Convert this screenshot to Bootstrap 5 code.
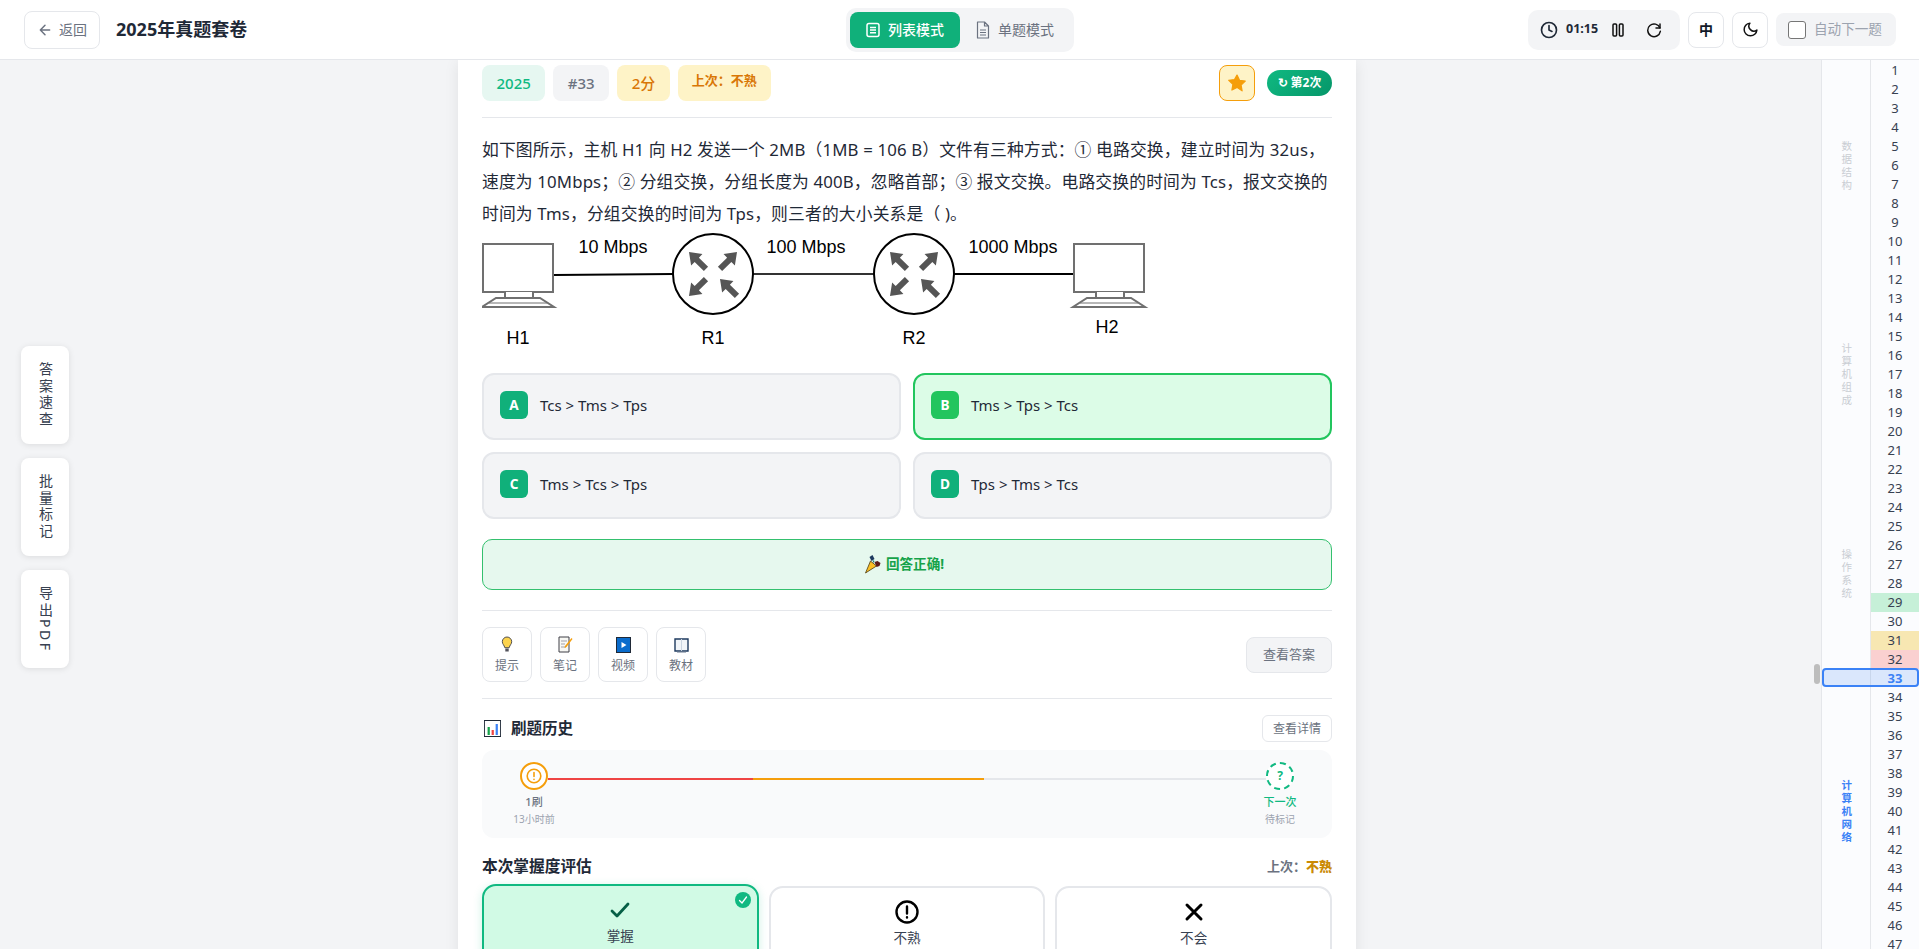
<!DOCTYPE html>
<html lang="zh-CN">
<head>
    <meta charset="UTF-8">
    <meta name="viewport" content="width=device-width, initial-scale=1.0">
    <title>2025年真题套卷</title>
    <link href="https://cdn.jsdelivr.net/npm/bootstrap@5.3.1/dist/css/bootstrap.min.css" rel="stylesheet">
    <style>
        html, body {
            height: 100%;
            overflow: hidden;
        }

        body {
            background-color: #f3f4f6;
            color: #1f2937;
            font-family: "Noto Sans", "Noto Sans CJK SC", sans-serif;
        }

        svg {
            display: block;
            flex-shrink: 0;
        }

        /* top bar */
        .top-bar {
            height: 60px;
            background-color: #fff;
            border-bottom: 1px solid #e5e7eb;
            padding: 0 23px 0 24px;
        }

        .top-side {
            flex: 1 1 0;
        }

        .back-btn {
            height: 38px;
            width: 76px;
            padding: 0 12px;
            background-color: #fff;
            border: 1px solid #e5e7eb;
            border-radius: 8px;
            color: #6b7280;
            font-size: 14px;
            margin-right: 16px;
            gap: 6px;
        }

        .page-title {
            font-size: 18px;
            font-weight: 700;
            margin: 0;
        }

        .mode-group {
            background-color: #f3f4f6;
            border-radius: 10px;
            padding: 4px;
        }

        .mode-btn {
            width: 110px;
            height: 36px;
            border-radius: 8px;
            font-size: 14px;
            color: #6b7280;
        }

        .mode-on {
            background-color: #10b07a;
            color: #fff;
            font-weight: 500;
        }

        .timer-box {
            height: 40px;
            padding: 0 12px;
            background-color: #f3f4f6;
            border-radius: 10px;
        }

        .timer-text {
            font-size: 12.5px;
            font-weight: 700;
            width: 30px;
            white-space: nowrap;
        }

        .timer-btn {
            width: 28px;
            height: 28px;
        }

        .square-btn {
            width: 36px;
            height: 36px;
            background-color: #fff;
            border: 1px solid #e5e7eb;
            border-radius: 8px;
            font-size: 14px;
            font-weight: 700;
            color: #111827;
        }

        .auto-box {
            height: 33px;
            width: 120px;
            padding-left: 12px;
            background-color: #f3f4f6;
            border-radius: 8px;
            color: #9ca3af;
            font-size: 13.6px;
        }

        .auto-check {
            width: 18px;
            height: 18px;
            background-color: #fff;
            border: 1px solid #767676;
            border-radius: 3px;
        }

        /* page columns */
        .page-body {
            height: 889px;
        }

        .main-area {
            padding-right: 7px;
            overflow: hidden;
            position: relative;
        }

        .scroll-thumb {
            position: absolute;
            right: 1px;
            top: 604px;
            width: 6px;
            height: 20px;
            background-color: #bdbdbd;
            border-radius: 3px;
        }

        .side-tools {
            position: absolute;
            left: 21px;
            top: 286px;
            gap: 14px;
        }

        .side-btn {
            width: 48px;
            height: 98px;
            background-color: #fff;
            border-radius: 8px;
            box-shadow: 0 1px 6px rgba(0, 0, 0, 0.1);
            color: #374151;
            font-size: 14px;
            writing-mode: vertical-rl;
            letter-spacing: 2.5px;
            line-height: 1;
        }

        .paper {
            width: 898px;
            height: 960px;
            background-color: #fff;
            padding: 5px 24px 0;
            box-shadow: 0 2px 14px rgba(0, 0, 0, 0.08);
            flex-shrink: 0;
        }

        /* question head */
        .head-row {
            padding-bottom: 16px;
            border-bottom: 1px solid #e5e7eb;
        }

        .tag-item {
            height: 36px;
            padding: 0 14.5px;
            border-radius: 8px;
            font-size: 15px;
            font-weight: 500;
        }

        .tag-year {
            background-color: #e6f7f1;
            color: #10b981;
        }

        .tag-num {
            background-color: #f3f4f6;
            color: #6b7280;
        }

        .tag-score {
            background-color: #fef3c7;
            color: #d97706;
        }

        .tag-last {
            width: 93px;
            font-size: 13px;
            font-weight: 700;
            padding: 0 0 4px;
            justify-content: center;
        }

        .star-btn {
            width: 36px;
            height: 36px;
            margin-right: 12px;
            background-color: #fef3c7;
            border: 1px solid #f59e0b;
            border-radius: 8px;
        }

        .round-pill {
            height: 26px;
            width: 65px;
            background: linear-gradient(135deg, #10b981, #059669);
            color: #fff;
            font-size: 12px;
            font-weight: 700;
            border-radius: 13px;
        }

        .q-text {
            font-size: 16.8px;
            line-height: 32px;
            letter-spacing: 0.15px;
            margin: 16px 0 0;
            color: #1f2937;
        }

        .q-figure {
            font-family: "Liberation Sans", sans-serif;
            margin-bottom: 16px;
        }

        /* options */
        .option-grid {
            display: grid;
            grid-template-columns: 1fr 1fr;
            gap: 12px;
        }

        .option-item {
            height: 67px;
            padding: 16px;
            background-color: #f3f4f6;
            border: 2px solid #e5e7eb;
            border-radius: 12px;
            font-size: 15px;
            line-height: 28px;
            gap: 12px;
        }

        .option-key {
            width: 28px;
            height: 28px;
            background-color: #10b07a;
            color: #fff;
            border-radius: 6px;
            font-size: 13.6px;
            font-weight: 700;
        }

        .option-right {
            background-color: #dcfce7;
            border-color: #22c55e;
        }

        .option-right .option-key {
            background-color: #22c55e;
        }

        .result-box {
            height: 51px;
            margin-top: 20px;
            padding-right: 6px;
            background-color: #e6f8ee;
            border: 1px solid #34c06e;
            border-radius: 10px;
            color: #16a34a;
            font-size: 13.6px;
            font-weight: 700;
            gap: 4px;
        }

        /* tools */
        .tool-row {
            margin-top: 20px;
            padding: 16px 0;
            border-top: 1px solid #e5e7eb;
            border-bottom: 1px solid #e5e7eb;
        }

        .tool-btn {
            width: 50px;
            height: 55px;
            padding-top: 2px;
            background-color: #fff;
            border: 1px solid #e5e7eb;
            border-radius: 8px;
            color: #6b7280;
            font-size: 12px;
            gap: 4px;
        }

        .answer-btn {
            height: 36px;
            width: 86px;
            background-color: #f3f4f6;
            border: 1px solid #e5e7eb;
            border-radius: 8px;
            color: #6b7280;
            font-size: 13px;
        }

        /* history */
        .hist-head {
            margin-top: 16px;
            margin-bottom: 8px;
        }

        .hist-icon {
            margin: 0 10px 0 2px;
        }

        .hist-title {
            font-size: 15.5px;
            font-weight: 700;
            margin: 0;
        }

        .detail-btn {
            height: 27px;
            width: 70px;
            background-color: #fff;
            border: 1px solid #e5e7eb;
            border-radius: 6px;
            color: #6b7280;
            font-size: 12px;
        }

        .hist-panel {
            position: relative;
            padding: 12px 32px;
            background-color: #f9fafb;
            border-radius: 12px;
        }

        .hist-track {
            position: absolute;
            left: 66px;
            right: 66px;
            top: 28px;
            height: 2px;
            background-color: #e5e7eb;
        }

        .hist-red {
            width: 205px;
            background-color: #ef4444;
        }

        .hist-orange {
            width: 231px;
            background-color: #f59e0b;
        }

        .hist-node {
            width: 40px;
            position: relative;
            white-space: nowrap;
        }

        .hist-dot {
            width: 28px;
            height: 28px;
            border-radius: 50%;
            background-color: #fff;
            margin-bottom: 4px;
        }

        .dot-warn {
            border: 2.5px solid #f59e0b;
        }

        .dot-next {
            border: 2.5px dashed #10b981;
            color: #10b981;
            font-size: 12px;
            font-weight: 700;
        }

        .hist-label {
            font-size: 11px;
            line-height: 16px;
            font-weight: 500;
            color: #6b7280;
        }

        .hist-label-next {
            color: #10b981;
        }

        .hist-time {
            font-size: 10px;
            line-height: 14px;
            margin-top: 2px;
            color: #9ca3af;
        }

        /* mastery */
        .rate-head {
            margin-top: 16px;
            margin-bottom: 8px;
            line-height: 24px;
        }

        .rate-title {
            font-size: 15.7px;
            font-weight: 700;
            margin: 0;
        }

        .rate-last {
            font-size: 13px;
            font-weight: 700;
            color: #6b7280;
        }

        .rate-last b {
            color: #ca8a04;
        }

        .rate-grid {
            display: grid;
            grid-template-columns: repeat(3, 1fr);
            gap: 10px;
        }

        .rate-item {
            position: relative;
            height: 100px;
            padding-top: 12px;
            background-color: #fff;
            border: 2px solid #e5e7eb;
            border-radius: 14px;
            font-size: 13.6px;
            line-height: 20px;
            color: #374151;
            gap: 4px;
        }

        .rate-on {
            background-color: #d1fae5;
            border-color: #10b981;
            box-shadow: 0 2px 10px rgba(16, 185, 129, 0.2);
            transform: translateY(-2px);
        }

        .rate-tick {
            position: absolute;
            top: 6px;
            right: 6px;
            width: 16px;
            height: 16px;
            border-radius: 50%;
            background-color: #10b981;
        }

        /* right rail */
        .rail {
            position: relative;
            width: 98px;
            background-color: #fbfcfe;
            border-left: 1px solid #e5e7eb;
            flex-shrink: 0;
        }

        .rail-labels {
            width: 49px;
            border-right: 1px solid #e5e7eb;
            padding-top: 2px;
        }

        .rail-part {
            width: 100%;
            writing-mode: vertical-rl;
            font-size: 10.5px;
            letter-spacing: 2.5px;
            line-height: 1;
            color: #c9cdd3;
        }

        .part-a {
            height: 209px;
        }

        .part-b {
            height: 209px;
        }

        .part-c {
            height: 190px;
        }

        .part-d {
            height: 285px;
            color: #3b82f6;
            font-weight: 700;
        }

        .rail-nums {
            width: 48px;
            padding-top: 1px;
        }

        .num-row {
            height: 19px;
            line-height: 19px;
            text-align: center;
            font-size: 13px;
            color: #374151;
        }

        .num-good {
            background-color: #c6f0d8;
        }

        .num-mid {
            background-color: #f7e7b2;
        }

        .num-bad {
            background-color: #fad0d0;
        }

        .num-now {
            color: #3b82f6;
            font-weight: 700;
        }

        .rail-now {
            position: absolute;
            left: 0;
            right: 0;
            top: 608px;
            height: 19px;
            background-color: rgba(59, 130, 246, 0.17);
            border: 2px solid #3b82f6;
            border-radius: 4px;
        }
    </style>
</head>
<body>

    <!-- top bar -->
    <header class="top-bar d-flex align-items-center">
        <div class="top-side d-flex align-items-center">
            <button class="back-btn d-flex align-items-center">
                <svg width="16" height="16" viewBox="0 0 24 24" fill="none" stroke="#6b7280" stroke-width="2.2" stroke-linecap="round" stroke-linejoin="round"><path d="M19 12H5M12 19l-7-7 7-7"/></svg>
                返回
            </button>
            <h1 class="page-title">2025年真题套卷</h1>
        </div>
        <div class="mode-group d-flex">
            <div class="mode-btn mode-on d-flex align-items-center justify-content-center gap-2">
                <svg width="14" height="16" viewBox="0 0 14 16" fill="none" stroke="#fff" stroke-width="1.5"><rect x="1" y="1.5" width="12" height="13" rx="2"/><path d="M4 5.500h6M4 8h6M4 10.800h6"/></svg>
                列表模式
            </div>
            <div class="mode-btn d-flex align-items-center justify-content-center gap-2">
                <svg width="14" height="18" viewBox="0 0 14 18" fill="none" stroke="#6b7280" stroke-width="1.2" stroke-linejoin="round"><path d="M1.500 1h7l4 4v12h-11zM8.500 1v4h4M4 9h6M4 11.500h6M4 14h6"/></svg>
                单题模式
            </div>
        </div>
        <div class="top-side d-flex align-items-center justify-content-end gap-2">
            <div class="timer-box d-flex align-items-center gap-2">
                <svg width="18" height="18" viewBox="0 0 24 24" fill="none" stroke="#1f2937" stroke-width="2.2" stroke-linecap="round" stroke-linejoin="round"><circle cx="12" cy="12" r="10"/><path d="M12 6v6l4 2"/></svg>
                <span class="timer-text">01:15</span>
                <div class="timer-btn d-flex align-items-center justify-content-center">
                    <svg width="12" height="14" viewBox="0 0 12 14" fill="none" stroke="#111" stroke-width="1.5"><rect x="1" y="1" width="3.6" height="12" rx="1"/><rect x="7.4" y="1" width="3.6" height="12" rx="1"/></svg>
                </div>
                <div class="timer-btn d-flex align-items-center justify-content-center">
                    <svg width="16" height="16" viewBox="0 0 24 24" fill="none" stroke="#111" stroke-width="2.2" stroke-linecap="round" stroke-linejoin="round"><path d="M21 3v6h-6"/><path d="M21 9a9.500 9.500 0 1 0 .5 5"/></svg>
                </div>
            </div>
            <div class="square-btn d-flex align-items-center justify-content-center">中</div>
            <div class="square-btn d-flex align-items-center justify-content-center">
                <svg width="17" height="17" viewBox="0 0 24 24" fill="none" stroke="#111" stroke-width="2.1" stroke-linecap="round" stroke-linejoin="round"><path d="M21 12.800A9 9 0 1 1 11.200 3a7 7 0 0 0 9.800 9.800z"/></svg>
            </div>
            <label class="auto-box d-flex align-items-center gap-2">
                <span class="auto-check"></span>
                自动下一题
            </label>
        </div>
    </header>

    <div class="page-body d-flex">
        <main class="main-area flex-grow-1 d-flex justify-content-center">
            <article class="paper">
                <!-- tags -->
                <div class="head-row d-flex align-items-center justify-content-between">
                    <div class="d-flex gap-2">
                        <span class="tag-item tag-year d-flex align-items-center">2025</span>
                        <span class="tag-item tag-num d-flex align-items-center">#33</span>
                        <span class="tag-item tag-score d-flex align-items-center">2分</span>
                        <span class="tag-item tag-score tag-last d-flex align-items-center">上次：不熟</span>
                    </div>
                    <div class="d-flex align-items-center ms-auto">
                        <div class="star-btn d-flex align-items-center justify-content-center">
                            <svg width="20" height="20" viewBox="0 0 24 24" fill="#f59e0b" stroke="#f59e0b" stroke-width="1.5" stroke-linejoin="round"><path d="M12 2.500l3 6.300 6.900.9-5 4.800 1.200 6.900L12 17.200l-6.100 3.200 1.200-6.900-5-4.800 6.900-.9z"/></svg>
                        </div>
                        <span class="round-pill d-flex align-items-center justify-content-center">↻ 第2次</span>
                    </div>
                </div>

                <!-- question -->
                <p class="q-text">如下图所示，主机 H1 向 H2 发送一个 2MB（1MB = 106 B）文件有三种方式：① 电路交换，建立时间为 32us，速度为 10Mbps；② 分组交换，分组长度为 400B，忽略首部；③ 报文交换。电路交换的时间为 Tcs，报文交换的时间为 Tms，分组交换的时间为 Tps，则三者的大小关系是（ )。</p>
                <div class="q-figure">
                    <svg width="850" height="127" viewBox="0 0 850 127">
                        <defs>
                            <g id="pc" fill="#fff" stroke="#707070" stroke-width="2">
                                <rect x="1" y="14" width="70" height="48"/>
                                <path d="M23 62v6h28v-6"/>
                                <path d="M14 68h44l14 9H0z"/>
                                <path d="M7 73h58" stroke-width="1"/>
                            </g>
                            <g id="router">
                                <circle r="40" fill="#fff" stroke="#000" stroke-width="2"/>
                                <g fill="#555">
                                    <polygon transform="translate(-24,-22) rotate(45)" points="0,0 11,-8 11,-3 24,-3 24,3 11,3 11,8"/>
                                    <polygon transform="translate(24,-22) rotate(135)" points="0,0 11,-8 11,-3 24,-3 24,3 11,3 11,8"/>
                                    <polygon transform="translate(-24,22) rotate(-45)" points="0,0 11,-8 11,-3 24,-3 24,3 11,3 11,8"/>
                                    <polygon transform="translate(7,5) rotate(45)" points="0,0 11,-8 11,-3 24,-3 24,3 11,3 11,8"/>
                                </g>
                            </g>
                        </defs>
                        <path d="M72 45L191 44" stroke="#000" stroke-width="2"/>
                        <path d="M271 44H392" stroke="#333" stroke-width="2"/>
                        <path d="M472 44H591" stroke="#000" stroke-width="2"/>
                        <use href="#pc"/>
                        <use href="#pc" x="591"/>
                        <use href="#router" x="231" y="44"/>
                        <use href="#router" x="432" y="44"/>
                        <g font-size="18" fill="#000" text-anchor="middle">
                            <text x="131" y="23">10 Mbps</text>
                            <text x="324" y="23">100 Mbps</text>
                            <text x="531" y="23">1000 Mbps</text>
                            <text x="36" y="114">H1</text>
                            <text x="231" y="114">R1</text>
                            <text x="432" y="114">R2</text>
                            <text x="625" y="103">H2</text>
                        </g>
                    </svg>
                </div>

                <!-- options -->
                <div class="option-grid">
                    <div class="option-item d-flex"><span class="option-key d-flex align-items-center justify-content-center">A</span>Tcs &gt; Tms &gt; Tps</div>
                    <div class="option-item option-right d-flex"><span class="option-key d-flex align-items-center justify-content-center">B</span>Tms &gt; Tps &gt; Tcs</div>
                    <div class="option-item d-flex"><span class="option-key d-flex align-items-center justify-content-center">C</span>Tms &gt; Tcs &gt; Tps</div>
                    <div class="option-item d-flex"><span class="option-key d-flex align-items-center justify-content-center">D</span>Tps &gt; Tms &gt; Tcs</div>
                </div>

                <div class="result-box d-flex align-items-center justify-content-center">
                    <svg width="18" height="19" viewBox="0 0 17 19"><path d="M6 6l6 5L1 18z" fill="#fbbf24" stroke="#4b3a10" stroke-width=".8"/><path d="M5 2l3-2 2 4-3 2z" fill="#1e3a5f"/><path d="M10 7l3-1 3 2-1 3-3 1z" fill="#5b1a1a"/><path d="M8 5l2 1-1 2z" fill="#0f766e"/></svg>
                    回答正确!
                </div>

                <!-- tools -->
                <div class="tool-row d-flex align-items-center justify-content-between">
                    <div class="d-flex gap-2">
                        <div class="tool-btn d-flex flex-column align-items-center justify-content-center">
                            <svg width="12" height="17" viewBox="0 0 12 17"><path d="M6 1a4.700 4.700 0 0 1 4.700 4.700c0 2.400-2 3.400-2.500 6H3.800C3.300 9.100 1.300 8.100 1.300 5.700A4.700 4.700 0 0 1 6 1z" fill="#fcd34d" stroke="#3f3f46" stroke-width=".9"/><path d="M4.300 12.500h3.400v3h-3.400z" fill="#52525b"/></svg>
                            提示
                        </div>
                        <div class="tool-btn d-flex flex-column align-items-center justify-content-center">
                            <svg width="15" height="17" viewBox="0 0 15 17"><path d="M1 1h10v15H1z" fill="#f8f8f4" stroke="#3f3f46"/><path d="M3 5h6M3 8h4M3 11h5" stroke="#a1a1aa"/><path d="M13.500 2L7 10l-.5 2 2-1 6-8z" fill="#f59e0b"/></svg>
                            笔记
                        </div>
                        <div class="tool-btn d-flex flex-column align-items-center justify-content-center">
                            <svg width="15" height="16" viewBox="0 0 15 16"><rect x=".5" y=".5" width="14" height="15" fill="#0a6ccc" stroke="#1f2937"/><path d="M5.500 5l5 3-5 3z" fill="#fff"/></svg>
                            视频
                        </div>
                        <div class="tool-btn d-flex flex-column align-items-center justify-content-center">
                            <svg width="15" height="16" viewBox="0 0 15 16"><path d="M1 2h13v12H1z" fill="#f1f5f9" stroke="#1e3a5f" stroke-width="1.400"/><path d="M7.500 2v12" stroke="#cbd5e1"/><path d="M3 15h9" stroke="#64748b"/></svg>
                            教材
                        </div>
                    </div>
                    <div class="answer-btn d-flex align-items-center justify-content-center">查看答案</div>
                </div>

                <!-- history -->
                <div class="hist-head d-flex align-items-center justify-content-between">
                    <div class="d-flex align-items-center">
                        <svg class="hist-icon" width="17" height="17" viewBox="0 0 19 17" preserveAspectRatio="none"><rect x=".5" y=".5" width="18" height="16" fill="#fff" stroke="#1f2937"/><path d="M4 15V7h2.500v8z" fill="#16a34a"/><path d="M8.500 15v-5H11v5z" fill="#ef4444"/><path d="M13 15V4h2.500v11z" fill="#3b82f6"/></svg>
                        <h2 class="hist-title">刷题历史</h2>
                    </div>
                    <div class="detail-btn d-flex align-items-center justify-content-center">查看详情</div>
                </div>
                <div class="hist-panel">
                    <div class="hist-track d-flex">
                        <div class="hist-red"></div>
                        <div class="hist-orange"></div>
                    </div>
                    <div class="d-flex justify-content-between">
                        <div class="hist-node d-flex flex-column align-items-center">
                            <div class="hist-dot dot-warn d-flex align-items-center justify-content-center">
                                <svg width="16" height="16" viewBox="0 0 16 16" fill="none" stroke="#f59e0b" stroke-width="1.600" stroke-linecap="round"><circle cx="8" cy="8" r="6.800"/><path d="M8 4.500v4M8 11.300v.2"/></svg>
                            </div>
                            <div class="hist-label">1刷</div>
                            <div class="hist-time">13小时前</div>
                        </div>
                        <div class="hist-node d-flex flex-column align-items-center">
                            <div class="hist-dot dot-next d-flex align-items-center justify-content-center">?</div>
                            <div class="hist-label hist-label-next">下一次</div>
                            <div class="hist-time">待标记</div>
                        </div>
                    </div>
                </div>

                <!-- mastery -->
                <div class="rate-head d-flex align-items-center justify-content-between">
                    <h2 class="rate-title">本次掌握度评估</h2>
                    <span class="rate-last">上次：<b>不熟</b></span>
                </div>
                <div class="rate-grid">
                    <div class="rate-item rate-on d-flex flex-column align-items-center">
                        <span class="rate-tick d-flex align-items-center justify-content-center">
                            <svg width="10" height="10" viewBox="0 0 10 10" fill="none" stroke="#fff" stroke-width="1.300" stroke-linecap="round"><path d="M1.500 5.500L4 8l4.500-6"/></svg>
                        </span>
                        <svg width="24" height="24" viewBox="0 0 24 24" fill="none" stroke="#065f46" stroke-width="2.800" stroke-linecap="round" stroke-linejoin="round"><path d="M4 13l5 5L20 6"/></svg>
                        掌握
                    </div>
                    <div class="rate-item d-flex flex-column align-items-center">
                        <svg width="24" height="24" viewBox="0 0 24 24" fill="none" stroke="#000" stroke-width="2.400" stroke-linecap="round"><circle cx="12" cy="12" r="10.500"/><path d="M12 6.500v7M12 17.300v.2"/></svg>
                        不熟
                    </div>
                    <div class="rate-item d-flex flex-column align-items-center">
                        <svg width="24" height="24" viewBox="0 0 24 24" fill="none" stroke="#000" stroke-width="3" stroke-linecap="round"><path d="M5 5l14 14M19 5L5 19"/></svg>
                        不会
                    </div>
                </div>
            </article>
            <div class="side-tools d-flex flex-column">
                <div class="side-btn d-flex align-items-center justify-content-center">答案速查</div>
                <div class="side-btn d-flex align-items-center justify-content-center">批量标记</div>
                <div class="side-btn d-flex align-items-center justify-content-center">导出PDF</div>
            </div>
            <div class="scroll-thumb"></div>
        </main>

        <!-- question rail -->
        <aside class="rail d-flex">
            <div class="rail-labels">
                <div class="rail-part part-a d-flex align-items-center justify-content-center">数据结构</div>
                <div class="rail-part part-b d-flex align-items-center justify-content-center">计算机组成</div>
                <div class="rail-part part-c d-flex align-items-center justify-content-center">操作系统</div>
                <div class="rail-part part-d d-flex align-items-center justify-content-center">计算机网络</div>
            </div>
            <div class="rail-nums" id="railNums"></div>
            <div class="rail-now"></div>
        </aside>
    </div>

    <script>
        // question numbers for the rail
        const marks = { 29: "num-good", 31: "num-mid", 32: "num-bad", 33: "num-now" };
        const railNums = document.getElementById("railNums");
        for (let i = 1; i <= 47; i++) {
            const row = document.createElement("div");
            row.className = "num-row " + (marks[i] || "");
            row.textContent = i;
            railNums.appendChild(row);
        }
    </script>

    <script src="https://cdn.jsdelivr.net/npm/bootstrap@5.3.1/dist/js/bootstrap.bundle.min.js"></script>
</body>
</html>
